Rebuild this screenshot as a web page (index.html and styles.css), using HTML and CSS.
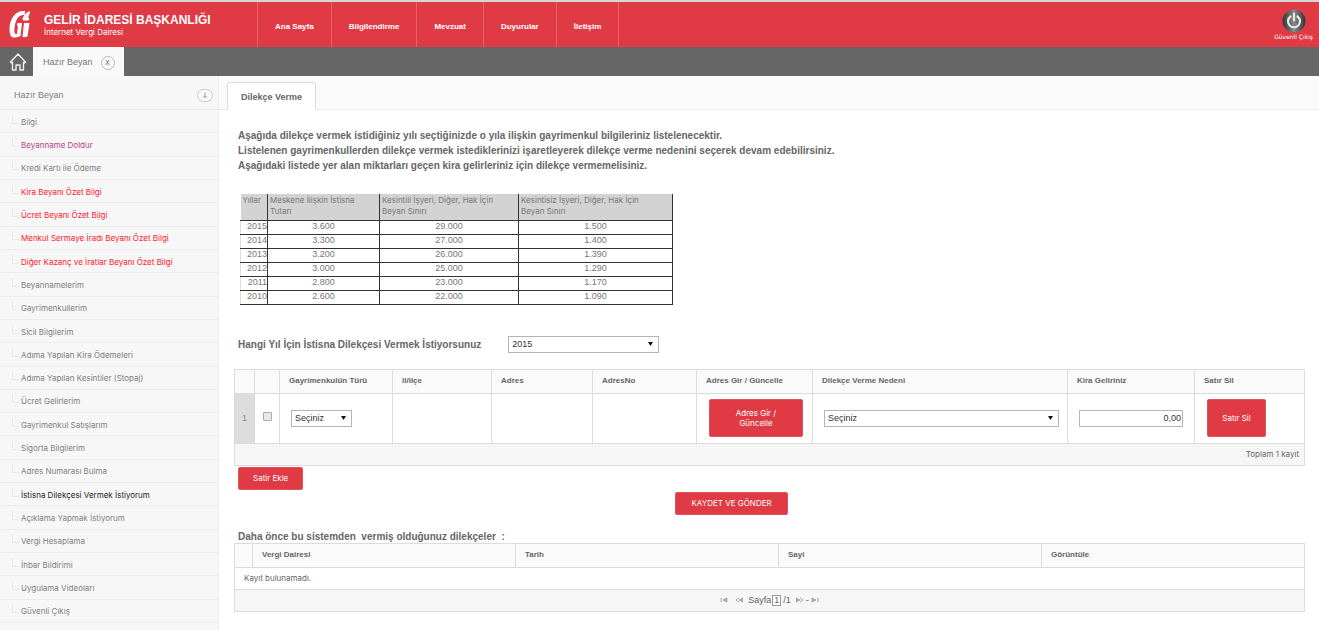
FILE: index.html
```html
<!DOCTYPE html>
<html lang="tr">
<head>
<meta charset="utf-8">
<title>Gelir İdaresi Başkanlığı - İnternet Vergi Dairesi</title>
<link rel="stylesheet" href="styles.css">
</head>
<body>
<header class="header">
  <a class="brand" href="#">
    <svg class="brand-logo" viewBox="0 0 22 28" aria-hidden="true">
      <path d="M14 1C6 1 1 9 .5 18c-.2 5 1 9.500 4 9.500 2.500.2 5.500-.5 7-1.500l1.500-13H8.500L8 16h1l-1 8c-2.500.5-3-2-2.500-6C6.500 10 9 4.500 15.500 5l.8-4z" fill="#fff"/>
      <path d="M15 13h5.500l-2 13.500c-1.500.8-3.500 1-5 .5z" fill="#fff"/>
      <path d="M13.500 10c.5-4 2.500-7 7.500-9-.3 3-.8 5-2 6.500 1 .2 1.300.5 1.200 2.500-2 .8-4.500.8-6.700 0z" fill="#fff"/>
    </svg>
    <span class="brand-text">
      <span class="brand-title">GELİR İDARESİ BAŞKANLIĞI</span>
      <span class="brand-sub">İnternet Vergi Dairesi</span>
    </span>
  </a>
  <nav class="nav">
    <a href="#">Ana Sayfa</a>
    <a href="#">Bilgilendirme</a>
    <a href="#">Mevzuat</a>
    <a href="#">Duyurular</a>
    <a href="#">İletişim</a>
  </nav>
  <a class="logout" href="#">
    <svg class="logout-icon" viewBox="0 0 24 24" aria-hidden="true">
      <defs><linearGradient id="metal" x1="0" x2="1"><stop offset="0" stop-color="#333"/><stop offset=".5" stop-color="#888"/><stop offset="1" stop-color="#333"/></linearGradient></defs>
      <circle cx="12" cy="12" r="11.500" fill="url(#metal)"/>
      <path d="M8.500 7.500a6 6 0 1 0 7 0M12 4.500v7" fill="none" stroke="#e8e8e8" stroke-width="2.200" stroke-linecap="round"/>
    </svg>
    <span>Güvenli Çıkış</span>
  </a>
</header>

<div class="tabbar">
  <a class="home" href="#" aria-label="Ana Sayfa">
    <svg viewBox="0 0 18 20" aria-hidden="true"><path d="M1.500 10 9 2l7.500 8-1 1-1-.8V18H11v-5H7v5H3.500v-7.800l-1 .8z" fill="none" stroke="#eee" stroke-width="1.400" stroke-linejoin="round"/></svg>
  </a>
  <div class="page-tab">
    <span>Hazır Beyan</span>
    <button class="close" type="button" aria-label="Kapat">x</button>
  </div>
</div>

<div class="body">
  <aside class="sidebar">
    <div class="side-head">
      <span>Hazır Beyan</span>
      <button class="collapse" type="button" aria-label="Daralt">
        <svg viewBox="0 0 16 14" aria-hidden="true"><rect x=".5" y=".5" width="15" height="12" rx="6" fill="#fafafa" stroke="#c8c8c8"/><path d="M8 3.500v5M6.300 7 8 8.700 9.700 7" fill="none" stroke="#999"/></svg>
      </button>
    </div>
    <ul class="side-list">
      <li><a href="#">Bilgi</a></li>
      <li><a class="visited" href="#">Beyanname Doldur</a></li>
      <li><a href="#">Kredi Kartı ile Ödeme</a></li>
      <li><a class="red" href="#">Kira Beyanı Özet Bilgi</a></li>
      <li><a class="red" href="#">Ücret Beyanı Özet Bilgi</a></li>
      <li><a class="red" href="#">Menkul Sermaye İradı Beyanı Özet Bilgi</a></li>
      <li><a class="red" href="#">Diğer Kazanç ve İratlar Beyanı Özet Bilgi</a></li>
      <li><a href="#">Beyannamelerim</a></li>
      <li><a href="#">Gayrimenkullerim</a></li>
      <li><a href="#">Sicil Bilgilerim</a></li>
      <li><a href="#">Adıma Yapılan Kira Ödemeleri</a></li>
      <li><a href="#">Adıma Yapılan Kesintiler (Stopaj)</a></li>
      <li><a href="#">Ücret Gelirlerim</a></li>
      <li><a href="#">Gayrimenkul Satışlarım</a></li>
      <li><a href="#">Sigorta Bilgilerim</a></li>
      <li><a href="#">Adres Numarası Bulma</a></li>
      <li><a class="current" href="#">İstisna Dilekçesi Vermek İstiyorum</a></li>
      <li><a href="#">Açıklama Yapmak İstiyorum</a></li>
      <li><a href="#">Vergi Hesaplama</a></li>
      <li><a href="#">İhbar Bildirimi</a></li>
      <li><a href="#">Uygulama Videoları</a></li>
      <li><a href="#">Güvenli Çıkış</a></li>
    </ul>
  </aside>

  <main class="main">
    <div class="subtabs"><h1 class="subtab">Dilekçe Verme</h1></div>
    <div class="content">
      <p class="intro">Aşağıda dilekçe vermek istidiğiniz yılı seçtiğinizde o yıla ilişkin gayrimenkul bilgileriniz listelenecektir.<br>
      Listelenen gayrimenkullerden dilekçe vermek istediklerinizi işaretleyerek dilekçe verme nedenini seçerek devam edebilirsiniz.<br>
      Aşağıdaki listede yer alan miktarları geçen kira gelirleriniz için dilekçe vermemelisiniz.</p>

      <table class="limits">
        <colgroup><col class="l-year"><col class="l-home"><col class="l-cut"><col class="l-nocut"></colgroup>
        <thead><tr><th>Yıllar</th><th>Meskene İlişkin İstisna<br>Tutarı</th><th>Kesintili İşyeri, Diğer, Hak İçin<br>Beyan Sınırı</th><th>Kesintisiz İşyeri, Diğer, Hak İçin<br>Beyan Sınırı</th></tr></thead>
        <tbody>
          <tr><td>2015</td><td>3.600</td><td>29.000</td><td>1.500</td></tr>
          <tr><td>2014</td><td>3.300</td><td>27.000</td><td>1.400</td></tr>
          <tr><td>2013</td><td>3.200</td><td>26.000</td><td>1.390</td></tr>
          <tr><td>2012</td><td>3.000</td><td>25.000</td><td>1.290</td></tr>
          <tr><td>2011</td><td>2.800</td><td>23.000</td><td>1.170</td></tr>
          <tr><td>2010</td><td>2.600</td><td>22.000</td><td>1.090</td></tr>
        </tbody>
      </table>

      <div class="question">
        <label for="year">Hangi Yıl İçin İstisna Dilekçesi Vermek İstiyorsunuz</label>
        <select id="year" class="field year"><option>2015</option><option>2014</option><option>2013</option></select>
      </div>

      <table class="grid">
        <colgroup><col class="c-no"><col class="c-check"><col class="c-type"><col class="c-city"><col class="c-addr"><col class="c-addrno"><col class="c-edit"><col class="c-reason"><col class="c-income"><col class="c-del"></colgroup>
        <thead><tr><th></th><th></th><th>Gayrimenkulün Türü</th><th>il/ilçe</th><th>Adres</th><th>AdresNo</th><th>Adres Gir / Güncelle</th><th>Dilekçe Verme Nedeni</th><th>Kira Geliriniz</th><th>Satır Sil</th></tr></thead>
        <tbody>
          <tr class="entry">
            <td class="row-no">1</td>
            <td class="check-cell"><input class="check" type="checkbox" aria-label="Satırı seç"></td>
            <td><select class="field type" aria-label="Gayrimenkulün Türü"><option>Seçiniz</option></select></td>
            <td></td><td></td><td></td>
            <td><button class="btn tall edit" type="button">Adres Gir /<br>Güncelle</button></td>
            <td class="reason-cell"><select class="field reason" aria-label="Dilekçe Verme Nedeni"><option>Seçiniz</option></select></td>
            <td><input class="field income" type="text" value="0,00" aria-label="Kira Geliriniz"></td>
            <td><button class="btn tall delete" type="button">Satır Sil</button></td>
          </tr>
        </tbody>
        <tfoot><tr><td class="total" colspan="10">Toplam 1 kayıt</td></tr></tfoot>
      </table>
      <button class="btn add" type="button">Satir Ekle</button>
      <div class="submit"><button class="btn save" type="button">KAYDET VE GÖNDER</button></div>

      <h2 class="history-title">Daha önce bu sistemden&nbsp; vermiş olduğunuz dilekçeler&nbsp; :</h2>
      <table class="grid">
        <colgroup><col class="h-no"><col class="h-col"><col class="h-col"><col class="h-col"><col class="h-col"></colgroup>
        <thead><tr><th></th><th>Vergi Dairesi</th><th>Tarih</th><th>Sayi</th><th>Görüntüle</th></tr></thead>
        <tbody><tr><td class="empty" colspan="5">Kayıt bulunamadı.</td></tr></tbody>
        <tfoot><tr><td colspan="5">
          <div class="pager">
            <button type="button" aria-label="İlk sayfa"><svg viewBox="0 0 8 6"><path d="M1 1v4M3 3l4-2v4z"/></svg></button>
            <button class="prev" type="button" aria-label="Önceki sayfa"><svg viewBox="0 0 8 6"><path d="M4 1 1 3l3 2" fill="none"/><path d="M4 3l4-2v4z"/></svg></button>
            <label for="page">Sayfa</label><input id="page" class="page" type="text" value="1"><span>/1</span>
            <button class="next" type="button" aria-label="Sonraki sayfa"><svg viewBox="0 0 8 6"><path d="M4 1l3 2-3 2" fill="none"/><path d="M4 3 0 1v4z"/></svg></button>
            <span class="dash">-</span>
            <button class="last" type="button" aria-label="Son sayfa"><svg viewBox="0 0 8 6"><path d="M7 1v4M5 3 1 1v4z"/></svg></button>
          </div>
        </td></tr></tfoot>
      </table>
    </div>
  </main>
</div>
</body>
</html>
```
FILE: styles.css
```css
* { box-sizing: border-box; }

body {
  margin: 0;
  min-height: 100vh;
  display: flex;
  flex-direction: column;
  background: #fff;
  color: #666;
  font-family: "Liberation Sans", Arial, sans-serif;
  font-size: 9px;
  line-height: 11px;
}

a { color: inherit; text-decoration: none; }
button, input, select { font: inherit; color: inherit; margin: 0; }
button { cursor: pointer; }
table { border-collapse: collapse; table-layout: fixed; }

/* Header */
.header {
  display: flex;
  height: 47px;
  border-top: 2px solid #d5d5d5;
  background: #e03a45;
  color: #fff;
}
.brand { display: flex; width: 257px; padding: 8px 0 0 9px; }
.brand-logo { width: 22px; height: 28px; }
.brand-text { display: flex; flex-direction: column; padding: 3px 0 0 13px; }
.brand-title { font-size: 12px; font-weight: bold; line-height: 14px; white-space: nowrap; }
.brand-sub { font-family: Inter, sans-serif; font-size: 8px; }
.nav { display: flex; border-left: 1px solid #e8616a; font-size: 8px; font-weight: bold; }
.nav a { display: flex; align-items: center; padding: 4px 17px 0; border-right: 1px solid #e8616a; }
.logout {
  display: flex;
  flex-direction: column;
  align-items: center;
  margin-left: auto;
  padding: 7px 6px 0 0;
  font-family: "DejaVu Sans", sans-serif;
  font-size: 6px;
  line-height: 8px;
}
.logout-icon { width: 24px; height: 24px; }

/* Open pages */
.tabbar { display: flex; height: 29px; background: #666; }
.home { display: flex; align-items: center; justify-content: center; width: 33px; padding-left: 3px; }
.home svg { width: 18px; height: 20px; }
.page-tab { display: flex; align-items: center; gap: 8px; padding: 2px 9px 0 10px; background: #f9f9f9; color: #777; }
.close {
  width: 14px;
  height: 14px;
  padding: 0;
  border: 1px solid #bbb;
  border-radius: 50%;
  background: none;
  line-height: 11px;
}

.body { display: flex; flex: 1; }

/* Sidebar */
.sidebar {
  display: flex;
  flex-direction: column;
  flex: none;
  width: 219px;
  padding-bottom: 7px;
  border-right: 1px solid #eee;
  background: #f7f7f7;
  color: #808080;
}
.side-head {
  display: flex;
  align-items: center;
  justify-content: space-between;
  height: 34px;
  padding: 6px 5px 0 14px;
  border-bottom: 1px solid #eaeaea;
}
.collapse { display: flex; padding: 0; border: 0; background: none; }
.collapse svg { width: 16px; height: 14px; }
.side-list {
  display: grid;
  flex: 1;
  grid-auto-rows: 1fr;
  margin: 0;
  padding: 0;
  list-style: none;
  font-family: Inter, sans-serif;
  font-size: 8px;
}
.side-list li { display: flex; align-items: center; padding: 2px 0 0 12px; border-bottom: 1px solid #ececec; }
.side-list li::before { content: ""; width: 6px; height: 8px; margin: 0 2px 6px 0; border: solid #e9e9e9; border-width: 0 0 1px 1px; }
.visited { color: #b8408a; }
.red { color: #ff1a2c; }
.current { color: #222; }

/* Main area */
.main { flex: 1; min-width: 0; }
.subtabs { display: flex; align-items: flex-end; height: 34px; padding-left: 8px; border-bottom: 1px solid #eaeaea; background: #fafafa; }
.subtab {
  height: 28px;
  margin: 0 0 -1px;
  padding: 0 13px;
  border: 1px solid #ddd;
  border-bottom: 0;
  border-radius: 3px 3px 0 0;
  background: #fff;
  font-size: 9px;
  line-height: 28px;
}
.content { padding: 18px 15px; }
.intro { margin: 0 0 21px 4px; font-size: 10px; font-weight: bold; line-height: 15px; }

.limits { width: 432px; margin-left: 6px; color: #777; }
.l-year { width: 27px; }
.l-home { width: 112px; }
.l-cut { width: 139px; }
.l-nocut { width: 154px; }
.limits th {
  height: 26px;
  padding: 1px 0 2px 2px;
  border: 1px solid #333;
  border-width: 0 1px 1px 0;
  background: #d3d3d3;
  font-family: Inter, sans-serif;
  font-size: 8px;
  font-weight: normal;
  text-align: left;
  vertical-align: top;
}
.limits td { height: 14px; padding: 0 0 1px; border: 1px solid #333; text-align: center; }
.limits td:first-child { border-left-color: #ddd; text-align: right; }

.question { display: flex; align-items: center; gap: 27px; margin: 31px 0 16px 4px; font-size: 10px; font-weight: bold; }
.field { height: 17px; border: 1px solid #b5b5b5; border-radius: 0; background-color: #fff; color: #333; font-size: 9px; font-weight: normal; }
select.field {
  appearance: none;
  padding: 0 16px 0 3px;
  background-image: url("data:image/svg+xml,%3Csvg xmlns='http://www.w3.org/2000/svg' width='5' height='4'%3E%3Cpath d='M0 0h5L2.500 4z' fill='%23111'/%3E%3C/svg%3E");
  background-repeat: no-repeat;
  background-position: right 5px center;
}
.year { width: 151px; }

/* Data grids */
.grid { width: 100%; }
.grid th, .grid td { border: 1px solid #dcdcdc; padding: 0 9px; text-align: left; }
.grid th { height: 24px; padding-bottom: 2px; background: #fafafa; font-size: 8px; }
.grid td { height: 22px; }
.grid tfoot td { background: #f6f6f6; }
.c-no { width: 20px; }
.c-check { width: 25px; }
.c-type { width: 113px; }
.c-city { width: 99px; }
.c-addr { width: 101px; }
.c-addrno { width: 104px; }
.c-edit { width: 116px; }
.c-reason { width: 255px; }
.c-income { width: 127px; }
.c-del { width: 110px; }
.h-no { width: 18px; }
.h-col { width: 263px; }
.grid .entry td { height: 50px; padding: 0 8px 0 11px; }
.grid .entry .row-no { padding: 0; background: #ddd; color: #888; text-align: center; }
.grid .entry .check-cell { padding: 0; text-align: center; vertical-align: middle; }
.check { appearance: none; width: 9px; height: 9px; border: 1px solid #aaa; border-radius: 1px; background: #e8e8e8; }
.type { width: 61px; }
.reason { width: 100%; }
.income { width: 104px; padding: 0 1px; text-align: right; }
.grid .total, .grid .empty { font-family: Inter, sans-serif; font-size: 8px; }
.grid .total { padding-right: 5px; text-align: right; }

.btn { display: block; height: 23px; padding: 0 15px; border: 1px solid #e4525c; border-radius: 2px; background: #e03a45; color: #fff; font-family: Inter, sans-serif; font-size: 8px; line-height: 10px; }
.tall { height: 38px; margin-left: 1px; }
.edit { width: 94px; }
.delete { width: 59px; padding: 0; }
.add { margin: 1px 0 0 4px; padding: 0 14px; }
.submit { display: flex; justify-content: center; width: 93%; padding-top: 2px; }

.history-title { margin: 16px 0 0 4px; font-size: 10px; line-height: 12px; }
.pager { display: flex; align-items: center; justify-content: center; }
.pager button { display: flex; margin-right: 7px; padding: 0; border: 0; background: none; }
.pager svg { width: 8px; height: 6px; fill: #aaa; stroke: #aaa; stroke-width: 1; }
.pager .prev { margin-right: 5px; }
.pager .next { margin: 0 2px 0 5px; }
.pager .last { margin-right: 0; }
.pager .dash { margin-right: 2px; }
.page { width: 9px; height: 11px; margin: 0 2px 0 1px; padding: 0; border: 1px solid #999; background: #fff; text-align: center; }
```
